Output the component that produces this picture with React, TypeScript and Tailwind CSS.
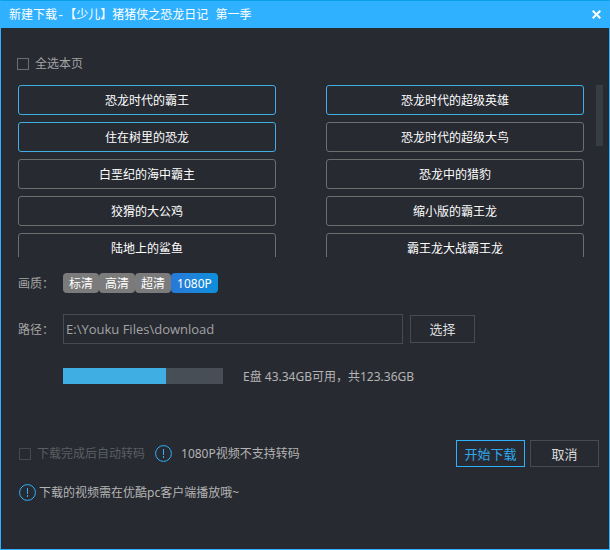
import { clsx } from "clsx";
import { useState } from "react";

type Episode = { id: number; title: string };

const EPISODES: Episode[] = [
	{ id: 1, title: "恐龙时代的霸王" },
	{ id: 2, title: "恐龙时代的超级英雄" },
	{ id: 3, title: "住在树里的恐龙" },
	{ id: 4, title: "恐龙时代的超级大鸟" },
	{ id: 5, title: "白垩纪的海中霸主" },
	{ id: 6, title: "恐龙中的猎豹" },
	{ id: 7, title: "狡猾的大公鸡" },
	{ id: 8, title: "缩小版的霸王龙" },
	{ id: 9, title: "陆地上的鲨鱼" },
	{ id: 10, title: "霸王龙大战霸王龙" },
];

const QUALITIES = ["标清", "高清", "超清", "1080P"];

const DISK = { usedPercent: 64.5, label: "E盘 43.34GB可用，共123.36GB" };

const InfoIcon = () => (
	<svg
		className="size-[17px] shrink-0"
		viewBox="0 0 17 17"
		fill="none"
		stroke="#2fb1ff"
		aria-hidden="true"
	>
		<circle cx="8.5" cy="8.5" r="7.9" />
		<path d="M8.5 4v6M8.5 11v2" />
	</svg>
);

const TitleBar = () => (
	<header className="flex h-[27px] items-center justify-between bg-[#2fb1ff] pr-2 pl-2">
		<h1 className="pt-0.5 font-['Liberation_Mono','Noto_Sans_CJK_SC',monospace] text-xs text-white">
			新建下载-【少儿】猪猪侠之恐龙日记 第一季
		</h1>
		<button type="button" aria-label="关闭" className="text-white">
			<svg className="size-[9px]" viewBox="0 0 9 9" stroke="currentColor" strokeWidth="2">
				<path d="M.7.7l7.6 7.6M8.3.7L.7 8.3" />
			</svg>
		</button>
	</header>
);

const Checkbox = ({
	label,
	disabled,
	className,
}: {
	label: string;
	disabled?: boolean;
	className?: string;
}) => (
	<label
		className={clsx(
			"flex items-center gap-1.5",
			disabled ? "text-[#5b5e63]" : "text-[#a3a3a3]",
			className,
		)}
	>
		<input
			type="checkbox"
			disabled={disabled}
			className={clsx(
				"size-3 appearance-none border checked:bg-[#3eaee3]",
				disabled ? "border-[#44484f]" : "border-[#6b6e74]",
			)}
		/>
		{label}
	</label>
);

const EpisodeList = () => {
	const [selected, setSelected] = useState<number[]>([1, 2, 3]);

	const toggle = (id: number) =>
		setSelected((ids) => (ids.includes(id) ? ids.filter((i) => i !== id) : [...ids, id]));

	return (
		<div className="mt-[13px] flex h-43 gap-3 overflow-hidden pr-1.5 pl-[17px]">
			<ul className="grid flex-1 auto-rows-[30px] grid-cols-2 gap-x-[50px] gap-y-[7px]">
				{EPISODES.map(({ id, title }) => (
					<li key={id}>
						<button
							type="button"
							aria-pressed={selected.includes(id)}
							onClick={() => toggle(id)}
							className={clsx(
								"h-full w-full rounded-[3px] border pt-0.5 text-white",
								selected.includes(id) ? "border-[#3eaee3]" : "border-[#6e6e6e]",
							)}
						>
							{title}
						</button>
					</li>
				))}
			</ul>
			<div className="h-[61px] w-[7px] bg-[#373d45]" />
		</div>
	);
};

const QualityPicker = () => {
	const [quality, setQuality] = useState("1080P");

	return (
		<div className="flex">
			{QUALITIES.map((q) => (
				<button
					key={q}
					type="button"
					aria-pressed={q === quality}
					onClick={() => setQuality(q)}
					className={clsx(
						"h-5 rounded px-1.5 pt-0.5 text-white",
						q === quality ? "bg-linear-to-r from-[#2779d8] to-[#0b8fdc]" : "bg-[#7b7b7b]",
					)}
				>
					{q}
				</button>
			))}
		</div>
	);
};

export default function App() {
	return (
		<main className="flex min-h-screen flex-col border border-[#2fb1ff] border-t-[#0aa0e6] bg-[#272a31] font-['Noto_Sans','Noto_Sans_CJK_SC',sans-serif] text-xs text-[#a3a3a3]">
			<TitleBar />
			<Checkbox label="全选本页" className="mt-7 ml-4" />
			<EpisodeList />

			<div className="mt-4 flex items-center pl-[17px]">
				<span className="w-[45px] pt-0.5">画质：</span>
				<QualityPicker />
			</div>

			<div className="mt-[21px] flex items-center pr-2.5 pl-[17px]">
				<label htmlFor="path" className="w-[45px] shrink-0 pt-0.5">
					路径：
				</label>
				<input
					id="path"
					defaultValue="E:\Youku Files\download"
					className="h-[30px] max-w-[340px] min-w-0 flex-1 border border-[#484b53] bg-transparent px-0.5 font-['Open_Sans',sans-serif] text-[13px] outline-none"
				/>
				<button
					type="button"
					className="ml-[7px] h-7 w-[65px] border border-[#484b53] pt-0.5 text-[13px] text-[#dcdcdc]"
				>
					选择
				</button>
			</div>

			<div className="mt-[23px] flex items-center gap-5 pl-[62px]">
				<div className="h-4 w-40 bg-[#474e56]">
					<div className="h-full bg-[#3eaee3]" style={{ width: `${DISK.usedPercent}%` }} />
				</div>
				<span className="pt-0.5 text-[#b4b4b4]">{DISK.label}</span>
			</div>

			<div className="mt-[55px] flex items-center pr-2.5 pl-[18px]">
				<Checkbox label="下载完成后自动转码" disabled />
				<div className="ml-2.5 flex items-center gap-[9px] text-[#b4b4b4]">
					<InfoIcon />
					1080P视频不支持转码
				</div>
				<div className="ml-auto flex gap-[5px] text-[13px]">
					<button
						type="button"
						className="h-[27px] w-[69px] border border-[#2fb1ff] pt-0.5 text-[#2fa8f0]"
					>
						开始下载
					</button>
					<button
						type="button"
						className="h-[27px] w-[69px] border border-[#484b53] pt-0.5 text-[#dcdcdc]"
					>
						取消
					</button>
				</div>
			</div>

			<p className="mt-[17px] flex items-center gap-[3px] pl-[18px] text-[#b4b4b4]">
				<InfoIcon />
				下载的视频需在优酷pc客户端播放哦~
			</p>
		</main>
	);
}
